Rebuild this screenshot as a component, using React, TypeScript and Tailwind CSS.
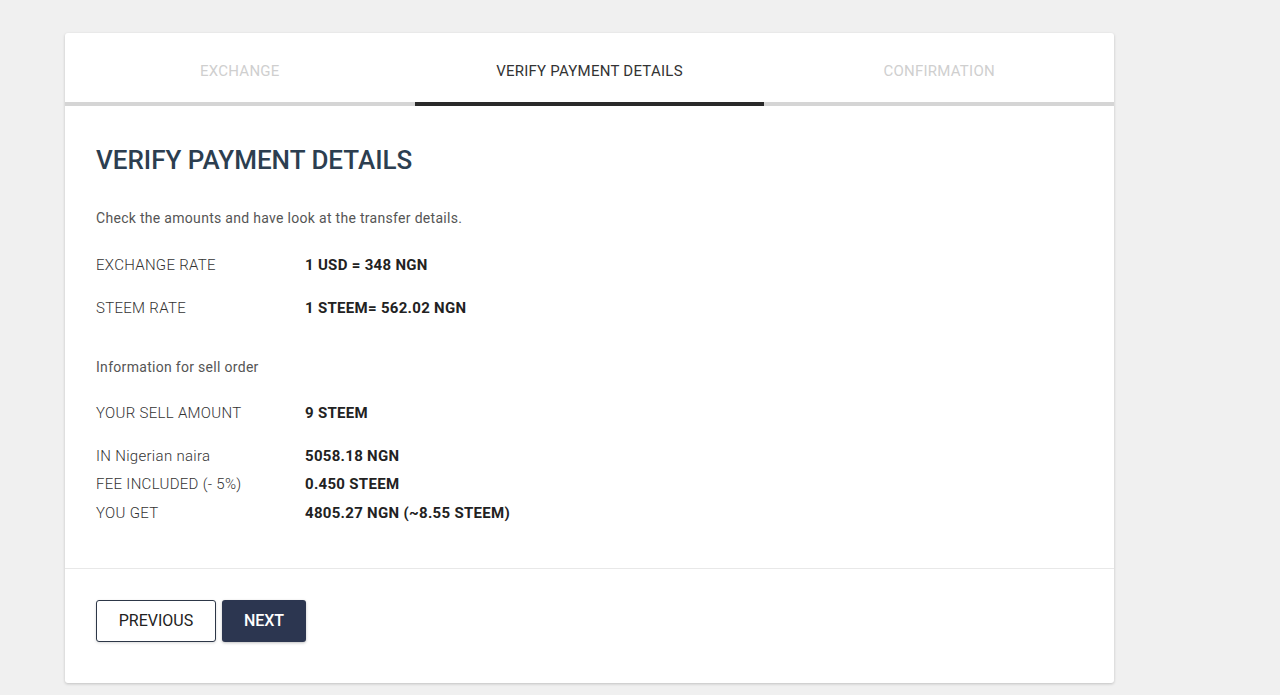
import React from 'react';

const tabs = [
  { label: 'EXCHANGE', active: false },
  { label: 'VERIFY PAYMENT DETAILS', active: true },
  { label: 'CONFIRMATION', active: false },
];

const Row: React.FC<{ label: string; value: string; className?: string }> = ({ label, value, className }) => (
  <div className={`flex items-center text-[15px] leading-[22px] tracking-[0.3px] ${className ?? ''}`}>
    <div className="w-[209px] font-light text-[#333]">{label}</div>
    <div className="font-bold text-[#222]">{value}</div>
  </div>
);

export default function App() {
  return (
    <div className="min-h-[695px] bg-[#f0f0f0] pt-[33px] pl-[65px]" style={{ fontFamily: 'Roboto, "Noto Sans", sans-serif' }}>
      <div className="w-[1049px] rounded-[3px] bg-white shadow-[0_1px_3px_rgba(0,0,0,0.2)]">
        <div className="grid grid-cols-3">
          {tabs.map((t) => (
            <div
              key={t.label}
              className={`flex h-[73px] items-center justify-center border-b-4 pt-[7px] text-[15px] tracking-[0.25px] ${
                t.active ? 'border-[#2a2a2a] text-[#333]' : 'border-[#d5d5d5] text-[#cfcfcf]'
              }`}
            >
              {t.label}
            </div>
          ))}
        </div>

        <div className="px-[31px] pt-[38px] pb-[44px]">
          <h1 className="text-[26px] font-medium leading-[32px] text-[#2c3e50]">VERIFY PAYMENT DETAILS</h1>
          <p className="mt-[32px] text-[14px] leading-[20px] tracking-[0.3px] text-[#555]">
            Check the amounts and have look at the transfer details.
          </p>
          <Row className="mt-[26px]" label="EXCHANGE RATE" value="1 USD = 348 NGN" />
          <Row className="mt-[21px]" label="STEEM RATE" value="1 STEEM= 562.02 NGN" />
          <p className="mt-[38px] text-[14px] leading-[20px] tracking-[0.3px] text-[#555]">Information for sell order</p>
          <Row className="mt-[25px]" label="YOUR SELL AMOUNT" value="9 STEEM" />
          <div className="mt-[21px] flex flex-col gap-[6px]">
            <Row label="IN Nigerian naira" value="5058.18 NGN" />
            <Row label="FEE INCLUDED (- 5%)" value="0.450 STEEM" />
            <Row className="mt-px" label="YOU GET" value="4805.27 NGN (~8.55 STEEM)" />
          </div>
        </div>

        <div className="flex gap-[6px] border-t border-[#e8e8e8] px-[31px] pt-[31px] pb-[41px]">
          <button className="h-[42px] w-[120px] rounded-[3px] border border-[#2d3748] bg-white text-[16px] text-[#222] shadow-[0_1px_3px_rgba(0,0,0,0.15)]">
            PREVIOUS
          </button>
          <button className="h-[42px] w-[84px] rounded-[3px] bg-[#2c3650] text-[16px] font-medium text-white shadow-[0_1px_3px_rgba(0,0,0,0.25)]">
            NEXT
          </button>
        </div>
      </div>
    </div>
  );
}
